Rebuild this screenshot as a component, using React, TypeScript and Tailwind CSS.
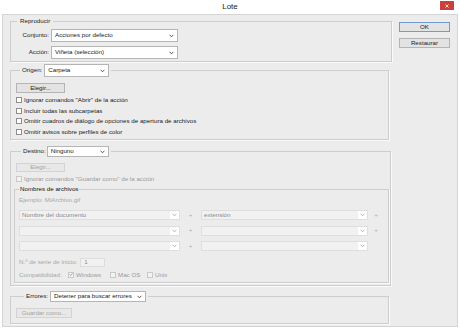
import type { ReactNode } from "react";

function Chevron({ dim }: { dim?: boolean }) {
  return (
    <svg width="5" height="4" viewBox="0 0 5 4" className="shrink-0">
      <path
        d="M0.6 0.8 L2.5 2.8 L4.4 0.8"
        fill="none"
        stroke={dim ? "#a8a8a8" : "#444"}
        strokeWidth="0.9"
      />
    </svg>
  );
}

function Select({
  value,
  w,
  h = "h-[12px]",
  dim,
}: {
  value: string;
  w: string;
  h?: string;
  dim?: boolean;
}) {
  if (dim) {
    return (
      <div className={`${w} ${h} flex items-center border border-[#dedede] bg-[#f1f1f1]`}>
        <span className="flex-1 pl-[2px] text-[#8a8a8a] truncate">{value}</span>
        <span className="w-[9px] h-full bg-white flex items-center justify-center">
          <Chevron dim />
        </span>
      </div>
    );
  }
  return (
    <div className={`${w} ${h} flex items-center border border-[#b5b5b5] bg-white`}>
      <span className="flex-1 pl-[3px] text-[#1a1a1a] truncate">{value}</span>
      <span className="pr-[3px] flex items-center">
        <Chevron />
      </span>
    </div>
  );
}

function Button({
  label,
  w,
  h = "h-[10px]",
  primary,
  disabled,
}: {
  label: string;
  w: string;
  h?: string;
  primary?: boolean;
  disabled?: boolean;
}) {
  const tone = disabled
    ? "border-[#d3d3d3] bg-[#e8e8e8] text-[#a3a3a3]"
    : primary
      ? "border-[#6f9dc8] bg-[#e3e3e3] text-[#1a1a1a]"
      : "border-[#b4b4b4] bg-[#e3e3e3] text-[#1a1a1a]";
  return (
    <div className={`${w} ${h} border ${tone} flex items-center justify-center`}>{label}</div>
  );
}

function Check({
  label,
  checked,
  disabled,
  className = "",
}: {
  label: string;
  checked?: boolean;
  disabled?: boolean;
  className?: string;
}) {
  return (
    <div className={`flex items-center gap-[2px] ${className}`}>
      <span
        className={`w-[6px] h-[6px] border flex items-center justify-center ${
          disabled ? "border-[#c9c9c9] bg-[#f3f3f3]" : "border-[#8e8e8e] bg-white"
        }`}
      >
        {checked && (
          <svg width="5" height="5" viewBox="0 0 5 5">
            <path d="M0.6 2.6 L1.9 3.9 L4.4 0.9" fill="none" stroke="#8a8a8a" strokeWidth="0.9" />
          </svg>
        )}
      </span>
      <span className={disabled ? "text-[#9a9a9a]" : "text-[#1a1a1a]"}>{label}</span>
    </div>
  );
}

function Group({
  legend,
  className = "",
  legendClass = "",
  children,
}: {
  legend: ReactNode;
  className?: string;
  legendClass?: string;
  children: ReactNode;
}) {
  return (
    <fieldset className={`border border-[#cdcdcd] shadow-[1px_1px_0_#fafafa] ${className}`}>
      <legend className={legendClass}>{legend}</legend>
      {children}
    </fieldset>
  );
}

export default function App() {
  return (
    <div className="w-[460px] h-[329px] bg-white flex flex-col font-['Liberation_Sans',Arial,sans-serif] text-[6.2px] leading-none text-[#1f1f1f]">
      <div className="relative h-[14px] shrink-0 flex items-center justify-center">
        <span className="text-[8px] text-[#222]">Lote</span>
        <div className="absolute right-[6px] top-[1px] w-[14px] h-[9px] bg-[#c9413a] flex items-center justify-center">
          <svg width="4" height="4" viewBox="0 0 4 4">
            <path d="M0.5 0.5 L3.5 3.5 M3.5 0.5 L0.5 3.5" stroke="#fff" strokeWidth="0.8" />
          </svg>
        </div>
      </div>

      <div className="mx-[2px] mb-[2px] flex-1 border border-[#d4d4d4] bg-[#ececec] flex">
        {/* left column */}
        <div className="w-[389px] pl-[7px] pt-[2px] flex flex-col">
          <Group
            legend="Reproducir"
            className="px-[5px] pb-[2px]"
            legendClass="ml-[1px] px-[3px] h-[8px] flex items-center text-[#222]"
          >
            <div className="pt-[4px] grid grid-cols-[33px_127px] gap-x-[2px] gap-y-[4px] items-center">
              <span className="text-right">Conjunto:</span>
              <Select value="Acciones por defecto" w="w-[127px]" h="h-[13px]" />
              <span className="text-right">Acción:</span>
              <Select value="Viñeta (selección)" w="w-[127px]" h="h-[13px]" />
            </div>
          </Group>

          <Group
            legend={
              <span className="flex items-center gap-[2px]">
                <span>Origen:</span>
                <Select value="Carpeta" w="w-[65px]" h="h-[13px]" />
              </span>
            }
            className="mt-[2px] mr-[3px] px-[5px] pb-[2px]"
            legendClass="ml-[4px] px-[2px]"
          >
            <div className="pt-[6px]">
              <Button label="Elegir..." w="w-[49px]" />
            </div>
            <div className="mt-[2px] flex flex-col">
              <Check className="h-[10.5px]" label={'Ignorar comandos "Abrir" de la acción'} />
              <Check className="h-[10.5px]" label="Incluir todas las subcarpetas" />
              <Check
                className="h-[10.5px]"
                label="Omitir cuadros de diálogo de opciones de apertura de archivos"
              />
              <Check className="h-[10.5px]" label="Omitir avisos sobre perfiles de color" />
            </div>
          </Group>

          <Group
            legend={
              <span className="flex items-center gap-[1px]">
                <span>Destino:</span>
                <Select value="Ninguno" w="w-[62px]" h="h-[11px]" />
              </span>
            }
            className="mt-[6px] mr-[4px] pl-[3px] pr-[1px] pb-[2px]"
            legendClass="ml-[7px] px-[2px]"
          >
            <div className="pt-[6px] pl-[2px]">
              <Button label="Elegir..." w="w-[49px]" h="h-[9px]" disabled />
            </div>
            <Check
              className="mt-[3px] h-[8px] pl-[2px]"
              label={'Ignorar comandos "Guardar como" de la acción'}
              disabled
            />
            <Group
              legend="Nombres de archivos"
              className="mt-[2px] px-[4px] pb-[3px]"
              legendClass="px-[1px] h-[8px] flex items-center text-[#111]"
            >
              <div className="pt-[3px] h-[11px] flex items-center text-[#a8a8a8]">
                Ejemplo: MiArchivo.gif
              </div>
              <div className="mt-[6px] flex flex-col gap-[5.5px]">
                <div className="flex items-center">
                  <Select value="Nombre del documento" w="w-[161px]" h="h-[10px]" dim />
                  <span className="w-[21px] text-center text-[#b0b0b0]">+</span>
                  <Select value="extensión" w="w-[167px]" h="h-[10px]" dim />
                  <span className="w-[16px] text-center text-[#b0b0b0]">+</span>
                </div>
                <div className="flex items-center">
                  <Select value="" w="w-[161px]" h="h-[10px]" dim />
                  <span className="w-[21px] text-center text-[#b0b0b0]">+</span>
                  <Select value="" w="w-[167px]" h="h-[10px]" dim />
                  <span className="w-[16px] text-center text-[#b0b0b0]">+</span>
                </div>
                <div className="flex items-center">
                  <Select value="" w="w-[161px]" h="h-[10px]" dim />
                  <span className="w-[21px] text-center text-[#b0b0b0]">+</span>
                  <Select value="" w="w-[167px]" h="h-[10px]" dim />
                </div>
              </div>
              <div className="mt-[7px] flex items-center gap-[3px]">
                <span className="text-[#a8a8a8]">N.º de serie de inicio:</span>
                <span className="w-[25px] h-[9px] border border-[#dcdcdc] bg-[#f1f1f1] pl-[3px] flex items-center text-[#8a8a8a]">
                  1
                </span>
              </div>
              <div className="mt-[4px] h-[8px] flex items-center">
                <span className="w-[49px] text-[#a8a8a8]">Compatibilidad:</span>
                <Check className="w-[42px]" label="Windows" checked disabled />
                <Check className="w-[37px]" label="Mac OS" disabled />
                <Check label="Unix" disabled />
              </div>
            </Group>
          </Group>

          <Group
            legend={
              <span className="flex items-center gap-[2px]">
                <span>Errores:</span>
                <Select value="Detener para buscar errores" w="w-[96px]" h="h-[11px]" />
              </span>
            }
            className="mt-[5px] mr-[3px] px-[5px] pb-[5px]"
            legendClass="ml-[8px] px-[2px]"
          >
            <div className="pt-[6px]">
              <Button label="Guardar como..." w="w-[56px]" disabled />
            </div>
          </Group>
        </div>

        {/* right column */}
        <div className="pl-[7px] pt-[7px] flex flex-col gap-[6px]">
          <Button label="OK" w="w-[51px]" primary />
          <Button label="Restaurar" w="w-[51px]" />
        </div>
      </div>
    </div>
  );
}
